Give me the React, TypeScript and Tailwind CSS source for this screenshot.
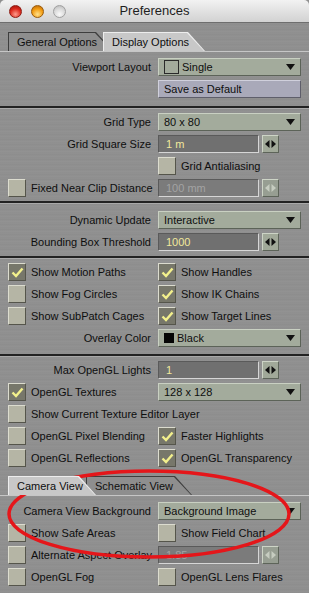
import React from 'react';

const Arrows = ({ disabled }: { disabled?: boolean }) => (
  <div
    className={`w-[17px] h-[18px] shrink-0 flex items-center justify-center border border-t-[#cdd4c6] border-l-[#cdd4c6] border-b-[#5d6459] border-r-[#5d6459] ${
      disabled ? 'bg-[#979e92]' : 'bg-[#a1a999]'
    }`}
  >
    <svg width="11" height="8" viewBox="0 0 11 8">
      <path d="M0 4 L4.5 0 L4.5 8 Z M11 4 L6.5 0 L6.5 8 Z" fill={disabled ? '#c6ccc0' : '#111'} />
    </svg>
  </div>
);

const Dropdown = ({ children }: { children: React.ReactNode }) => (
  <div className="h-[18px] w-full flex items-center pl-[5px] pr-[5px] bg-[#a3ab9c] border border-t-[#c9d0c2] border-l-[#c9d0c2] border-b-[#5c6358] border-r-[#5c6358]">
    <div className="flex-1 flex items-center gap-[3px]">{children}</div>
    <svg width="9" height="6" viewBox="0 0 9 6">
      <path d="M0 0H9L4.5 6Z" fill="#111" />
    </svg>
  </div>
);

const Field = ({ value, disabled }: { value: string; disabled?: boolean }) => (
  <div className="flex items-center gap-[3px]">
    <div
      className={`w-[101px] h-[18px] flex items-center pl-[7px] border border-t-[#5a5a5a] border-l-[#5a5a5a] border-b-[#d6d6d6] border-r-[#d6d6d6] ${
        disabled ? 'bg-[#7b7b7b] text-[#a3a3a3]' : 'bg-[#707070] text-[#f1e99c]'
      }`}
    >
      {value}
    </div>
    <Arrows disabled={disabled} />
  </div>
);

const Box = ({ checked }: { checked?: boolean }) => (
  <div
    className={`w-[18px] h-[18px] shrink-0 flex items-center justify-center border border-t-[#dcdccf] border-l-[#dcdccf] border-b-[#55554b] border-r-[#55554b] ${
      checked ? 'bg-[#77776a]' : 'bg-[#b5b5a5]'
    }`}
  >
    {checked && (
      <svg width="13" height="11" viewBox="0 0 13 11">
        <path d="M1.5 5.5 L5 9 L11.5 1.5" stroke="#f3f08c" strokeWidth="2.4" fill="none" />
      </svg>
    )}
  </div>
);

const Check = ({ label, checked }: { label: string; checked?: boolean }) => (
  <div className="flex items-center gap-[5px] h-[18px] whitespace-nowrap">
    <Box checked={checked} />
    <span>{label}</span>
  </div>
);

const Row = ({ left, right }: { left: React.ReactNode; right?: React.ReactNode }) => (
  <div className="grid grid-cols-[143px_143px] gap-x-[7px] h-[18px] items-center">
    <div>{left}</div>
    <div>{right}</div>
  </div>
);

const Label = ({ children }: { children: React.ReactNode }) => (
  <div className="text-right whitespace-nowrap">{children}</div>
);

const Tab = ({ label, active, className }: { label: string; active?: boolean; className: string }) => (
  <div
    className={`h-[19px] pt-[1px] px-[1px] [clip-path:polygon(0_0,calc(100%_-_17px)_0,100%_100%,0_100%)] ${className} ${
      active ? 'relative z-10 bg-[#ededed]' : 'bg-[#3e3e3e]'
    }`}
  >
    <div
      className={`h-full flex items-center pl-[8px] [clip-path:polygon(0_0,calc(100%_-_17px)_0,100%_100%,0_100%)] ${
        active ? 'bg-[#c8c8c8]' : 'bg-[#8e8e8e]'
      }`}
    >
      {label}
    </div>
  </div>
);

const Separator = ({ className }: { className: string }) => (
  <div className={className}>
    <div className="h-[2px] bg-[#222]" />
    <div className="h-[1px] bg-[#a9a9a9]" />
  </div>
);

export default function App() {
  return (
    <div className="relative w-[309px] h-[593px] overflow-hidden font-['Liberation_Sans',Arial,sans-serif] text-[11px] text-[#0e0e0e] bg-[#8f8f8f]">
      {/* title bar */}
      <div className="h-[23px] grid grid-cols-[1fr_auto_1fr] items-center rounded-t-[5px] bg-linear-to-b from-[#f2f2f2] to-[#d2d2d2] border-b border-[#6e6e6e]">
        <div className="flex items-center gap-[9px] pl-[9px]">
          <div className="w-[13px] h-[13px] rounded-full border border-[#8e1c14] bg-[radial-gradient(circle_at_50%_75%,#ff9c8c,#dc2a1e_55%,#9a1208)]" />
          <div className="w-[13px] h-[13px] rounded-full border border-[#9a5a08] bg-[radial-gradient(circle_at_50%_75%,#ffe08a,#f29c12_55%,#b0600a)]" />
          <div className="w-[13px] h-[13px] rounded-full border border-[#a0a0a0] bg-[radial-gradient(circle_at_50%_75%,#fafafa,#d6d6d6_60%,#b4b4b4)]" />
        </div>
        <div className="text-[13px] text-[#1e1e1e]">Preferences</div>
        <div />
      </div>

      <div className="bg-[repeating-linear-gradient(180deg,#919191_0px,#8c8c8c_2px,#939393_3px,#8e8e8e_5px)] h-full">
        {/* tabs */}
        <div className="pt-[9px]">
          <div className="flex pl-[8px]">
            <Tab label="General Options" className="w-[105px]" />
            <Tab label="Display Options" active className="w-[102px] -ml-[10px]" />
          </div>
          <div className="h-[1px] bg-[#c6c6c6]" />
        </div>

        <div className="px-[8px] mt-[6px] flex flex-col gap-[4px]">
          <Row
            left={<Label>Viewport Layout</Label>}
            right={
              <Dropdown>
                <div className="w-[15px] h-[14px] border border-[#2a2a2a] bg-[#a3ab9c]" />
                <span>Single</span>
              </Dropdown>
            }
          />
          <Row
            left={null}
            right={
              <div className="h-[18px] flex items-center pl-[5px] bg-[#a9a9b9] border border-t-[#d0d0dc] border-l-[#d0d0dc] border-b-[#5e5e6a] border-r-[#5e5e6a]">
                Save as Default
              </div>
            }
          />
        </div>

        <Separator className="mt-[8px]" />

        <div className="px-[8px] mt-[4px] flex flex-col gap-[4px]">
          <Row left={<Label>Grid Type</Label>} right={<Dropdown><span>80 x 80</span></Dropdown>} />
          <Row left={<Label>Grid Square Size</Label>} right={<Field value="1 m" />} />
          <Row left={null} right={<Check label="Grid Antialiasing" />} />
          <Row left={<Check label="Fixed Near Clip Distance" />} right={<Field value="100 mm" disabled />} />
        </div>

        <Separator className="mt-[4px]" />

        <div className="px-[8px] mt-[7px] flex flex-col gap-[4px]">
          <Row left={<Label>Dynamic Update</Label>} right={<Dropdown><span>Interactive</span></Dropdown>} />
          <Row left={<Label>Bounding Box Threshold</Label>} right={<Field value="1000" />} />
        </div>

        <Separator className="mt-[5px]" />

        <div className="px-[8px] mt-[4px] flex flex-col gap-[4px]">
          <Row left={<Check label="Show Motion Paths" checked />} right={<Check label="Show Handles" checked />} />
          <Row left={<Check label="Show Fog Circles" />} right={<Check label="Show IK Chains" checked />} />
          <Row left={<Check label="Show SubPatch Cages" />} right={<Check label="Show Target Lines" checked />} />
          <Row
            left={<Label>Overlay Color</Label>}
            right={
              <Dropdown>
                <div className="w-[10px] h-[10px] bg-[#050505]" />
                <span>Black</span>
              </Dropdown>
            }
          />
        </div>

        <Separator className="mt-[7px]" />

        <div className="px-[8px] mt-[4px] flex flex-col gap-[4px]">
          <Row left={<Label>Max OpenGL Lights</Label>} right={<Field value="1" />} />
          <Row left={<Check label="OpenGL Textures" checked />} right={<Dropdown><span>128 x 128</span></Dropdown>} />
          <Row left={<Check label="Show Current Texture Editor Layer" />} />
          <Row left={<Check label="OpenGL Pixel Blending" />} right={<Check label="Faster Highlights" checked />} />
          <Row left={<Check label="OpenGL Reflections" />} right={<Check label="OpenGL Transparency" checked />} />
        </div>

        {/* camera / schematic tabs */}
        <div className="mt-[9px]">
          <div className="flex pl-[8px]">
            <Tab label="Camera View" active className="w-[88px]" />
            <Tab label="Schematic View" className="w-[106px] -ml-[10px]" />
          </div>
          <div className="h-[1px] bg-[#c6c6c6]" />
        </div>

        <div className="px-[8px] mt-[6px] flex flex-col gap-[4px]">
          <Row left={<Label>Camera View Background</Label>} right={<Dropdown><span>Background Image</span></Dropdown>} />
          <Row left={<Check label="Show Safe Areas" />} right={<Check label="Show Field Chart" />} />
          <Row left={<Check label="Alternate Aspect Overlay" />} right={<Field value="1.85" disabled />} />
          <Row left={<Check label="OpenGL Fog" />} right={<Check label="OpenGL Lens Flares" />} />
        </div>
      </div>

      {/* red annotation ellipse */}
      <svg className="absolute inset-0 pointer-events-none" width="309" height="593" viewBox="0 0 309 593">
        <ellipse cx="149" cy="514" rx="140" ry="43" fill="none" stroke="#e5161a" strokeWidth="3.5" />
      </svg>
    </div>
  );
}
